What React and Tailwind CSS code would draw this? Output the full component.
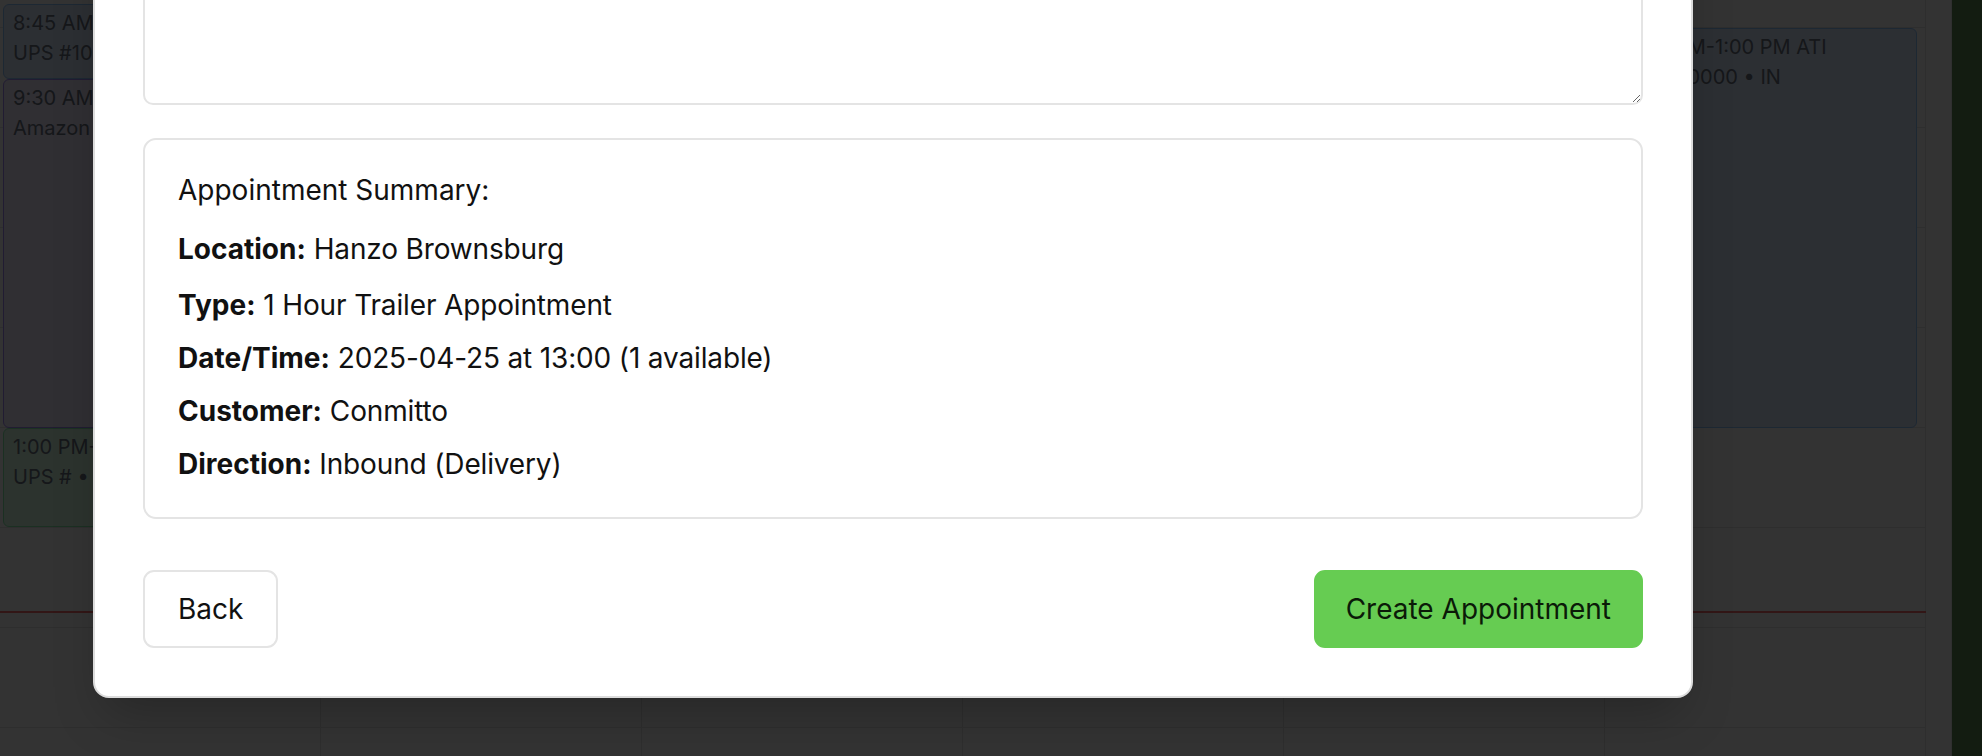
const columns = [0, 1, 2, 3, 4, 5];
const rowHeights = [28, 100, 100, 100, 100, 100, 100, 100];

const tones = {
	blue: "bg-[#dbeafe] border-[#93c5fd]",
	violet: "bg-[#ede9fe] border-[#a78bfa]",
	green: "bg-[#dcfce7] border-[#86efac]",
};

const events = [
	{ col: 0, top: 4, height: 75, time: "8:45 AM-9:30 AM UPS", sub: "UPS #10000 • IN", tone: "blue" },
	{ col: 0, top: 79, height: 349, time: "9:30 AM-1:00 PM Amazon", sub: "Amazon #10000 • IN", tone: "violet" },
	{ col: 0, top: 428, height: 99, time: "1:00 PM-2:00 PM UPS", sub: "UPS # • IN", tone: "green" },
	{ col: 5, top: 28, height: 400, time: "12:00 PM-1:00 PM ATI", sub: "ATI #100000 • IN", tone: "blue" },
];

const summary = [
	["Location:", "Hanzo Brownsburg"],
	["Type:", "1 Hour Trailer Appointment"],
	["Date/Time:", "2025-04-25 at 13:00 (1 available)"],
	["Customer:", "Conmitto"],
	["Direction:", "Inbound (Delivery)"],
];

function EventCard({ event }) {
	return (
		<div
			className={`absolute left-[3px] right-[8px] rounded-md border px-[9px] pt-[3px] text-[20px] leading-[30px] text-[#6b7280] overflow-hidden whitespace-nowrap ${tones[event.tone]}`}
			style={{ top: event.top, height: event.height }}
		>
			<p>{event.time}</p>
			<p>{event.sub}</p>
		</div>
	);
}

function Calendar() {
	return (
		<div className="flex h-full">
			<div className="relative flex w-[1926px]">
				{columns.map((col) => (
					<div key={col} className="relative flex-1 border-r border-[#e5e5e5]">
						{rowHeights.map((h, i) => (
							<div key={i} className="border-b border-[#e5e5e5]" style={{ height: h }} />
						))}
						{events
							.filter((e) => e.col === col)
							.map((e) => (
								<EventCard key={e.time} event={e} />
							))}
					</div>
				))}
				{/* current time line */}
				<div className="absolute left-0 top-[611px] h-[2px] w-full bg-[#f87171]" />
			</div>
			<div className="w-[26px] border-r border-[#ececec]" />
			<div className="flex-1 bg-[#5f8c55]" />
		</div>
	);
}

export default function App() {
	return (
		<div className="relative h-[756px] w-[1982px] overflow-hidden bg-white font-['Inter',sans-serif]">
			<Calendar />

			{/* Backdrop */}
			<div className="absolute inset-0 bg-black/80" />

			{/* Modal */}
			<div className="absolute bottom-[58px] left-[93px] w-[1600px] rounded-b-2xl border-2 border-[#dcdcdc] bg-white px-[48px] pb-[48px] text-[28px] leading-[40px] text-[#111] shadow-2xl">
				<textarea className="block h-[240px] w-full rounded-[10px] border-2 border-[#e4e4e4] outline-none" />

				<div className="mt-[33px] rounded-[13px] border-2 border-[#e4e4e4] px-[33px] pb-[33px] pt-[30px]">
					<p className="mb-[19px]">Appointment Summary:</p>
					<div className="flex flex-col gap-[13px]">
						{summary.map(([label, value], i) => (
							<p key={label} className={i === 0 ? "mb-[3px]" : ""}>
								<span className="font-bold">{label}</span>{" "}
								<span className="tracking-[-0.15px]">{value}</span>
							</p>
						))}
					</div>
				</div>

				<div className="mt-[51px] flex items-center justify-between">
					<button className="rounded-[11px] border-2 border-[#e4e4e4] bg-white px-[33px] py-[17px] text-[28px] leading-[40px] text-[#111]">
						Back
					</button>
					<button className="rounded-[11px] border-2 border-[#66cc52] bg-[#66cc52] px-[30px] py-[17px] text-[28px] leading-[40px] text-[#0b1a08]">
						Create Appointment
					</button>
				</div>
			</div>
		</div>
	);
}
